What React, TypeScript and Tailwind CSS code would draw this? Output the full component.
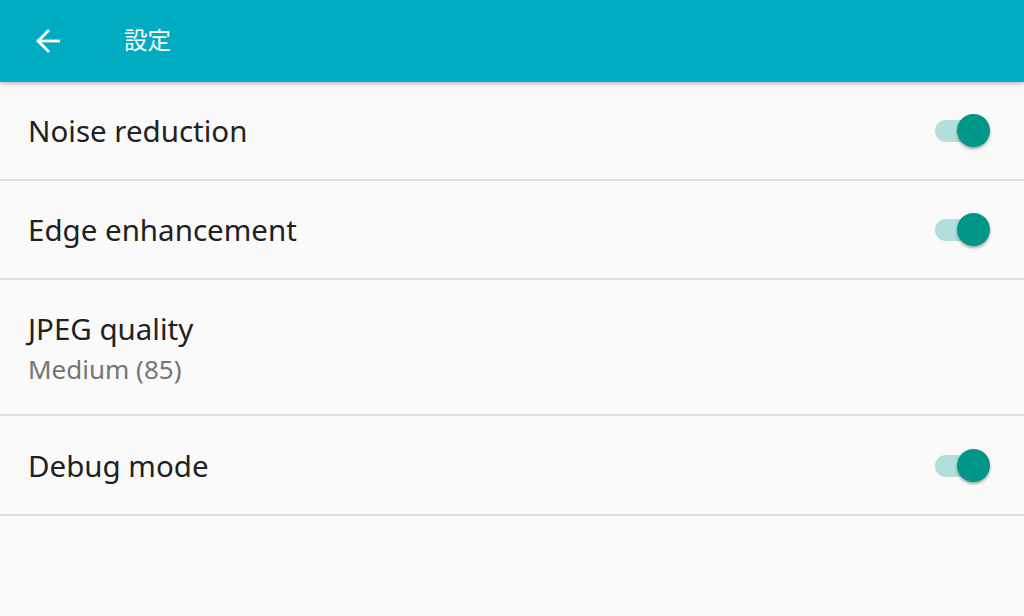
import React from "react";

function Toggle() {
  return (
    <div className="relative h-[33px] w-[56px]">
      <div className="absolute left-[1px] top-[6px] h-[22px] w-[48px] rounded-full bg-[#b2dfdb]" />
      <div className="absolute right-0 top-0 h-[33px] w-[33px] rounded-full bg-[#009688] shadow-[0_2px_3px_rgba(0,0,0,0.35)]" />
    </div>
  );
}

function Row({ title, summary, toggle, height }: { title: string; summary?: string; toggle?: boolean; height: string }) {
  return (
    <div className={`flex items-center justify-between border-b-2 border-[#dedede] pl-[28px] pr-[34px] ${height}`}>
      <div className={`flex flex-col ${summary ? "pt-[4px]" : "pt-[1px]"}`}>
        <span className="text-[29.5px] leading-[40px] text-[#212121]">{title}</span>
        {summary && <span className="text-[26px] leading-[40px] text-[#757575]">{summary}</span>}
      </div>
      {toggle && <Toggle />}
    </div>
  );
}

export default function App() {
  return (
    <div className="h-[616px] w-[1024px] overflow-hidden bg-[#fafafa]" style={{ fontFamily: '"Noto Sans", "Noto Sans CJK JP", sans-serif' }}>
      <header className="relative z-10 flex h-[82px] items-center bg-[#00acc1] shadow-[0_2px_4px_rgba(0,0,0,0.25)]">
        <svg className="ml-[34px] h-[28px] w-[28px]" viewBox="0 0 24 24" fill="none" stroke="white" strokeWidth="2.4" strokeLinecap="square">
          <path d="M21 12H4" />
          <path d="M12 3.5L3.5 12l8.5 8.5" />
        </svg>
        <span className="ml-[62px] text-[23.5px] text-white">設定</span>
      </header>
      <Row title="Noise reduction" toggle height="h-[99px]" />
      <Row title="Edge enhancement" toggle height="h-[99px]" />
      <Row title="JPEG quality" summary="Medium (85)" height="h-[136px]" />
      <Row title="Debug mode" toggle height="h-[100px]" />
    </div>
  );
}
